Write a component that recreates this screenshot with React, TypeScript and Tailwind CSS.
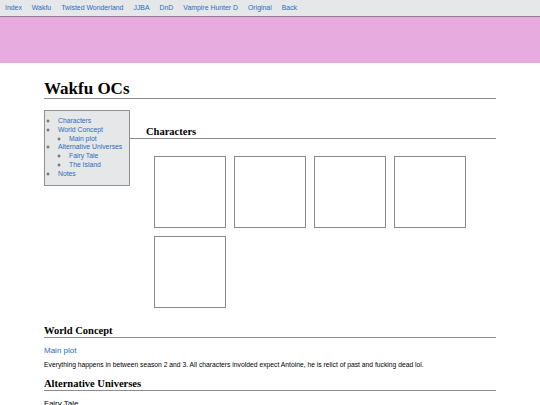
const navLinks = [
  "Index",
  "Wakfu",
  "Twisted Wonderland",
  "JJBA",
  "DnD",
  "Vampire Hunter D",
  "Original",
  "Back",
];

export default function App() {
  return (
    <div className="min-h-screen bg-white font-['Liberation_Sans',Arial,sans-serif] text-black">
      {/* Top nav */}
      <nav className="flex h-[17px] items-center gap-[10px] border-b border-[#8d7f8d] bg-[#e6e7e9] px-[5px] text-[6.9px] text-[#2a6cc0]">
        {navLinks.map((l) => (
          <a key={l} href="#">
            {l}
          </a>
        ))}
      </nav>

      {/* Banner */}
      <div className="h-[46px] bg-[#e8abe0]" />

      <main className="px-[44px] pt-[17px]">
        <h1 className="h-[19px] border-b border-[#8c8c8c] font-['Liberation_Serif',serif] text-[17px] font-bold leading-[18px]">
          Wakfu OCs
        </h1>

        <div className="mt-[11px] flex">
          {/* Table of contents */}
          <div className="h-[76px] w-[86px] shrink-0 border border-[#8f8f8f] bg-[#e6e7e9] py-[6px] text-[6.8px] leading-[8.8px] text-[#2a6cc0]">
            <ul className="list-[circle] pl-[13px] marker:text-[#555]">
              <li>Characters</li>
              <li>
                World Concept
                <ul className="list-[circle] pl-[11px]">
                  <li>Main plot</li>
                </ul>
              </li>
              <li>
                Alternative Universes
                <ul className="list-[circle] pl-[11px]">
                  <li>Fairy Tale</li>
                  <li>The Island</li>
                </ul>
              </li>
              <li>Notes</li>
            </ul>
          </div>

          <div className="flex-1">
            <h2 className="mt-[16px] h-[13px] border-b border-[#8c8c8c] pl-[16px] font-['Liberation_Serif',serif] text-[10.5px] font-bold leading-[12px]">
              Characters
            </h2>
            <div className="mt-[17px] flex flex-wrap gap-[8px] pl-[24px]">
              {[0, 1, 2, 3, 4].map((i) => (
                <div key={i} className="h-[72px] w-[72px] border border-[#8a8a8a] bg-white" />
              ))}
            </div>
          </div>
        </div>

        <h2 className="mt-[17px] h-[13px] border-b border-[#8c8c8c] font-['Liberation_Serif',serif] text-[10.5px] font-bold leading-[12px]">
          World Concept
        </h2>
        <p className="mt-[8px] text-[8px] leading-[10px] text-[#2a6cc0]">Main plot</p>
        <p className="mt-[5px] text-[6.75px] leading-[8px]">
          Everything happens in between season 2 and 3. All characters involded expect Antoine, he is relict of past and fucking dead lol.
        </p>

        <h2 className="mt-[9px] h-[13px] border-b border-[#8c8c8c] font-['Liberation_Serif',serif] text-[10.5px] font-bold leading-[12px]">
          Alternative Universes
        </h2>
        <p className="mt-[8px] text-[8px] leading-[10px]">Fairy Tale</p>
      </main>
    </div>
  );
}
